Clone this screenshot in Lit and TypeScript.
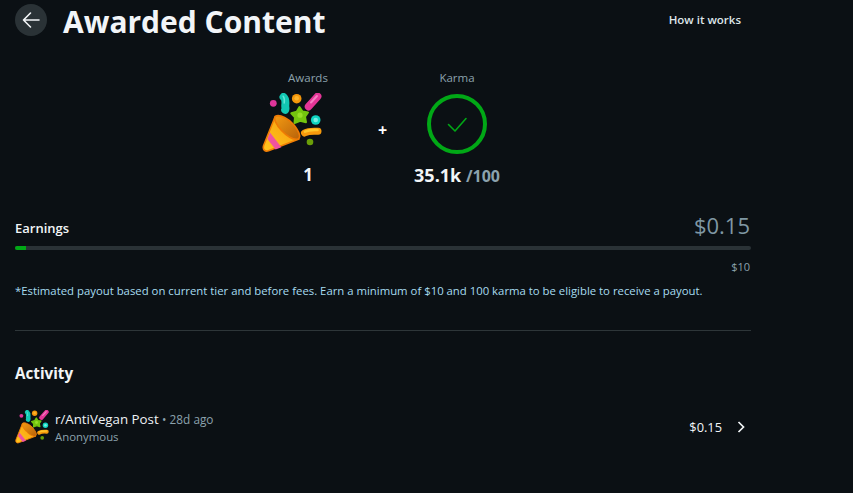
import { LitElement, html, css, svg } from "lit";
import { customElement } from "lit/decorators.js";

const party = (id: string) => svg`
  <defs>
    <linearGradient id="cone${id}" x1="0" y1="1" x2="1" y2="0"><stop offset="0" stop-color="#ffc61f"/><stop offset="1" stop-color="#f79a0c"/></linearGradient>
    <linearGradient id="mouth${id}" x1="0" y1="0" x2="1" y2="1"><stop offset="0" stop-color="#f39a12"/><stop offset="1" stop-color="#b8620a"/></linearGradient>
  </defs>
  <circle cx="11.3" cy="10.3" r="3.4" fill="#e0359a"/>
  <path d="M21.5 4 C23.8 6 23.6 9 23.3 12 C23 14.5 24 15.5 23.2 16.8" fill="none" stroke="#12c7b3" stroke-width="8" stroke-linecap="round"/>
  <path d="M21.2 3.2 C22.7 5 22.5 8 22.2 10" fill="none" stroke="#5fe6d6" stroke-width="1.5" stroke-linecap="round"/>
  <circle cx="34.7" cy="5.7" r="4.8" fill="#f5960a"/>
  <circle cx="34.7" cy="5.3" r="2.3" fill="#fdb52c"/>
  <path d="M46.6 13.6 L55.6 3.4" stroke="#e43597" stroke-width="7.6" stroke-linecap="round"/>
  <path d="M49 9.5 L55 3" stroke="#f57fc1" stroke-width="2" stroke-linecap="round"/>
  <path d="M37.5 14 L40.5 18.5 L46 19.5 L43 23.8 L44 29.3 L38.2 27.8 L32.5 30 L33 24.3 L29.3 20.3 L34.7 18.8 Z" fill="#74c50f" stroke="#74c50f" stroke-width="2" stroke-linejoin="round"/>
  <circle cx="38" cy="22.2" r="2.6" fill="#96de26"/>
  <circle cx="53.7" cy="27" r="4.8" fill="#0fd4c0"/>
  <circle cx="53.7" cy="27" r="2.3" fill="#76efe2"/>
  <path d="M42.5 40 C46 38.2 52 38 56 38.3" fill="none" stroke="#f79a0c" stroke-width="7" stroke-linecap="round"/>
  <path d="M43 38.6 C46.5 37 52 36.8 55.5 37" fill="none" stroke="#ffc62a" stroke-width="2.6" stroke-linecap="round"/>
  <circle cx="48" cy="49" r="3.3" fill="#6a9e08"/>
  <path d="M13 24 L1.6 52.5 C0.4 56.5 3 59 6.5 57.8 L37 46 Z" fill="url(#cone${id})" stroke="#f07d05" stroke-width="1.6" stroke-linejoin="round"/>
  <path d="M8 39.5 L19.4 54.3 L13.6 56.5 L5.4 46 Z" fill="#f0539f"/>
  <path d="M13.5 23.2 C18 21 27 26 32 32 C37 38.5 39.5 44 36 46 C31.5 47.5 24 42.5 19.5 37.5 C14.5 32 11 25.5 13.5 23.2 Z" fill="url(#mouth${id})" stroke="#ee7a05" stroke-width="1.6"/>
`;

@customElement("app-root")
export class AppRoot extends LitElement {
  static styles = css`
    :host {
      display: block;
      width: 853px;
      height: 493px;
      overflow: hidden;
      background: #0b1014;
      color: #f2f5f7;
      font-family: "Open Sans", "Noto Sans", sans-serif;
    }
    .page { width: 736px; margin-left: 15px; display: flex; flex-direction: column; }
    .head { height: 40px; padding-top: 4px; display: flex; align-items: flex-start; }
    .back {
      width: 32px; height: 32px; border-radius: 50%; background: #2a3236;
      display: flex; align-items: center; justify-content: center; flex: none;
    }
    h1 { margin: -2px 0 0 16px; font-size: 30px; line-height: 40px; font-weight: 700; color: #f2f5f8; white-space: nowrap; }
    .how { margin: 7px 10px 0 auto; font-size: 11.5px; line-height: 18px; font-weight: 600; color: #dfe6ea; }
    .stats { display: flex; justify-content: center; margin-top: 26px; height: 118px; padding-right: 1px; }
    .stat { display: flex; flex-direction: column; align-items: center; width: 60px; }
    .label { font-size: 11.5px; line-height: 16px; font-weight: 500; color: #8ba2ad; white-space: nowrap; }
    .picon { display: block; flex: none; margin: 7px 33px 0 0; width: 60px; height: 60px; }
    .ring { display: block; flex: none; margin-top: 8px; width: 60px; height: 60px; }
    .val { font-size: 18px; line-height: 22px; font-weight: 700; white-space: nowrap; color: #f2f5f7; }
    .a { margin-top: 11px; font-size: 17px; }
    .k { margin-top: 10px; }
    .val span { font-size: 16px; font-weight: 700; color: #8ba2ad; }
    .plus { width: 89px; padding-top: 50px; text-align: center; font-size: 16px; line-height: 20px; font-weight: 700; color: #fff; }
    .earn { display: flex; justify-content: space-between; align-items: flex-start; margin-top: 20px; height: 32px; }
    .earn b { margin-top: 11px; font-size: 13px; line-height: 18px; font-weight: 600; color: #f2f5f7; }
    .amount { margin-top: 2px; font-size: 22px; line-height: 30px; color: #7f97a3; font-weight: 400; padding-right: 1px; }
    .track { height: 4px; border-radius: 2px; background: #2a3236; margin-top: 6px; overflow: hidden; }
    .fill { height: 100%; background: #01a816; }
    .max { text-align: right; font-size: 11px; line-height: 16px; color: #8ba2ad; margin-top: 9px; font-weight: 500; padding-right: 1px; }
    .note { margin-top: 8px; font-size: 11.35px; line-height: 16px; color: #a7dcf0; white-space: nowrap; }
    hr { border: 0; height: 1px; background: #2e3639; margin: 31px 0 0; }
    h2 { margin: 32px 0 0; font-size: 15.2px; line-height: 20px; font-weight: 700; color: #f2f5f7; }
    .row { display: flex; align-items: center; margin-top: 26px; height: 36px; }
    .ricon { display: block; width: 34px; height: 34px; flex: none; margin-right: 6px; }
    .info { display: flex; flex-direction: column; }
    .title { font-size: 13.3px; line-height: 18px; font-weight: 400; color: #eef2f4; white-space: nowrap; }
    .title span { font-size: 11.8px; color: #8ba2ad; }
    .sub { font-size: 11.4px; line-height: 17px; color: #8ba2ad; }
    .price { margin-left: auto; font-size: 12.8px; line-height: 18px; font-weight: 500; color: #f2f5f7; }
    .chev { display: block; flex: none; width: 10px; height: 12px; margin-left: 14px; margin-right: 5px; }
  `;

  render() {
    return html`
      <div class="page">
        <div class="head">
          <div class="back">
            <svg width="18" height="18" viewBox="0 0 18 18" fill="none" stroke="#f2f5f7" stroke-width="1.6" stroke-linecap="round" stroke-linejoin="round">
              <path d="M17 9H1.5M8.5 2 1.5 9l7 7"/>
            </svg>
          </div>
          <h1>Awarded Content</h1>
          <div class="how">How it works</div>
        </div>
        <div class="stats">
          <div class="stat">
            <div class="label">Awards</div>
            <svg class="picon" viewBox="0 0 60 60">${party("a")}</svg>
            <div class="val a">1</div>
          </div>
          <div class="plus">+</div>
          <div class="stat">
            <div class="label">Karma</div>
            <svg class="ring" viewBox="0 0 60 60" fill="none">
              <circle cx="30" cy="30" r="28" stroke="#01a816" stroke-width="4"/>
              <path d="M21.5 30.5 28 37 39 24.5" stroke="#01a816" stroke-width="1.6" stroke-linecap="round" stroke-linejoin="round"/>
            </svg>
            <div class="val k">35.1k <span>/100</span></div>
          </div>
        </div>
        <div class="earn">
          <b>Earnings</b>
          <div class="amount">$0.15</div>
        </div>
        <div class="track"><div class="fill" style="width:${(0.15 / 10) * 100}%"></div></div>
        <div class="max">$10</div>
        <div class="note">*Estimated payout based on current tier and before fees. Earn a minimum of $10 and 100 karma to be eligible to receive a payout.</div>
        <hr />
        <h2>Activity</h2>
        <div class="row">
          <svg class="ricon" viewBox="0 0 60 60">${party("b")}</svg>
          <div class="info">
            <div class="title">r/AntiVegan Post <span>• 28d ago</span></div>
            <div class="sub">Anonymous</div>
          </div>
          <div class="price">$0.15</div>
          <svg class="chev" viewBox="0 0 10 12" fill="none" stroke="#f2f5f7" stroke-width="1.7"><path d="M2.5 1 7.5 6l-5 5"/></svg>
        </div>
      </div>
    `;
  }
}
